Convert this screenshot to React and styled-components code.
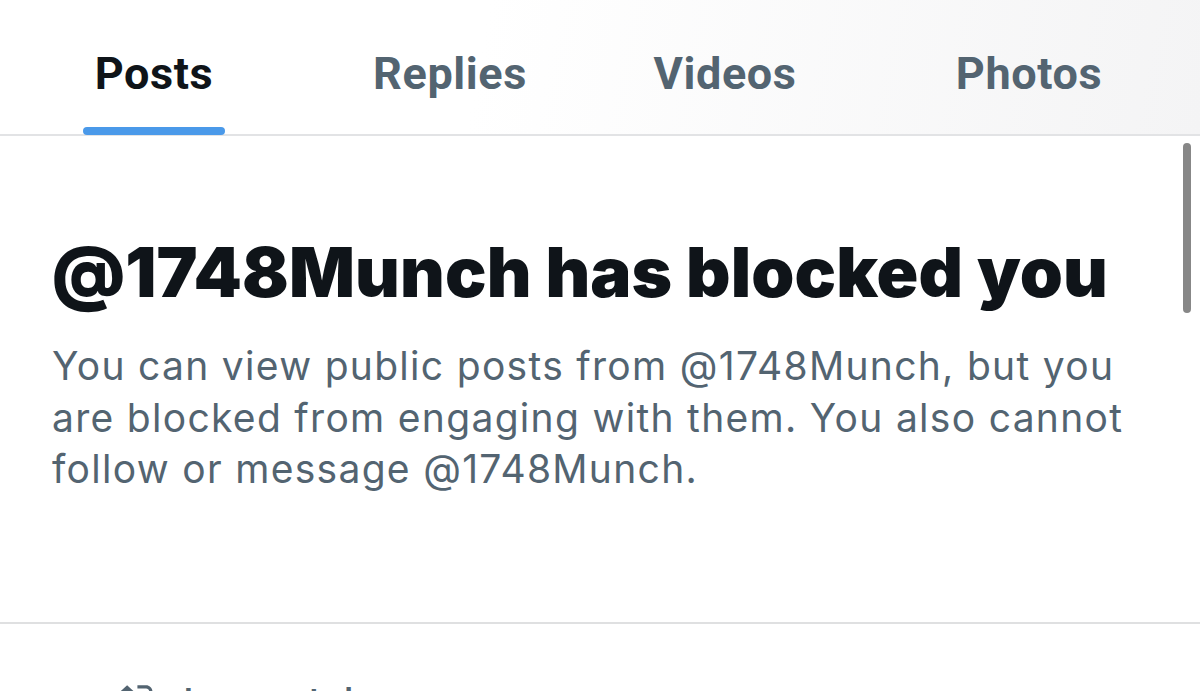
import React from "react";
import styled, { createGlobalStyle } from "styled-components";

const Global = createGlobalStyle`
  html, body { margin: 0; padding: 0; background: #ffffff; overflow: hidden; }
  * { box-sizing: border-box; }
`;

const Page = styled.div`
  position: relative;
  width: 1200px;
  height: 691px;
  overflow: hidden;
  background: #ffffff;
  font-family: Roboto, "Liberation Sans", sans-serif;
`;

const TabBar = styled.nav`
  display: grid;
  grid-template-columns: 308px 284px 266px 1fr;
  height: 136px;
  border-bottom: 2px solid #e2e3e5;
  background: linear-gradient(100deg, #ffffff 40%, #f4f4f5 100%);
`;

const Tab = styled.div`
  display: flex;
  flex-direction: column;
  align-items: center;
  padding-top: 52px;
`;

const TabLabel = styled.span`
  font-size: 45px;
  line-height: 44px;
  font-weight: 700;
  letter-spacing: 0.6px;
  color: ${(p) => (p.$active ? "#0f1419" : "#536471")};
`;

const Indicator = styled.div`
  margin-top: 31px;
  width: 142px;
  height: 8px;
  border-radius: 4px;
  background: ${(p) => (p.$active ? "#4a99e9" : "transparent")};
`;

const Blocked = styled.section`
  height: 488px;
  padding: 96px 0 0 52px;
  border-bottom: 2px solid #dfe0e1;
`;

const Heading = styled.h1`
  margin: 0;
  font-family: Inter, Roboto, sans-serif;
  font-size: 69px;
  line-height: 80px;
  font-weight: 900;
  letter-spacing: 0.1px;
  color: #0f1419;
  white-space: nowrap;
`;

const Body = styled.p`
  margin: 28px 0 0;
  font-family: Inter, Roboto, sans-serif;
  font-size: 39px;
  line-height: 51.5px;
  font-weight: 400;
  letter-spacing: 1.3px;
  color: #536471;
  white-space: nowrap;
`;

const Scrollbar = styled.div`
  position: absolute;
  left: 1183px;
  top: 143px;
  width: 8px;
  height: 170px;
  border-radius: 4px;
  background: #878787;
`;

const Social = styled.div`
  display: flex;
  align-items: flex-start;
  gap: 26px;
  padding: 55px 0 0 120px;
  color: #536471;
`;

const SocialText = styled.span`
  font-size: 30px;
  line-height: 36px;
  font-weight: 700;
  margin-top: 2px;
`;

const RepostIcon = () => (
  <svg width="38" height="38" viewBox="0 0 24 24" fill="#536471" aria-hidden="true">
    <path d="M4.5 3.88l4.432 4.14-1.364 1.46L5.5 7.55V16c0 1.1.896 2 2 2H13v2H7.5c-2.209 0-4-1.79-4-4V7.55L1.432 9.48.068 8.02 4.5 3.88zM16.5 6H11V4h5.5c2.209 0 4 1.790 4 4v8.45l2.068-1.93 1.364 1.46-4.432 4.140-4.432-4.14 1.364-1.46 2.068 1.93V8c0-1.1-.896-2-2-2z" />
  </svg>
);

const tabs = ["Posts", "Replies", "Videos", "Photos"];

export default function App() {
  return (
    <Page>
      <Global />
      <TabBar>
        {tabs.map((t, i) => (
          <Tab key={t}>
            <TabLabel $active={i === 0}>{t}</TabLabel>
            <Indicator $active={i === 0} />
          </Tab>
        ))}
      </TabBar>
      <Blocked>
        <Heading>@1748Munch has blocked you</Heading>
        <Body>
          You can view public posts from @1748Munch, but you
          <br />
          are blocked from engaging with them. You also cannot
          <br />
          follow or message @1748Munch.
        </Body>
      </Blocked>
      <Social>
        <RepostIcon />
        <SocialText>Ian reposted</SocialText>
      </Social>
      <Scrollbar />
    </Page>
  );
}
